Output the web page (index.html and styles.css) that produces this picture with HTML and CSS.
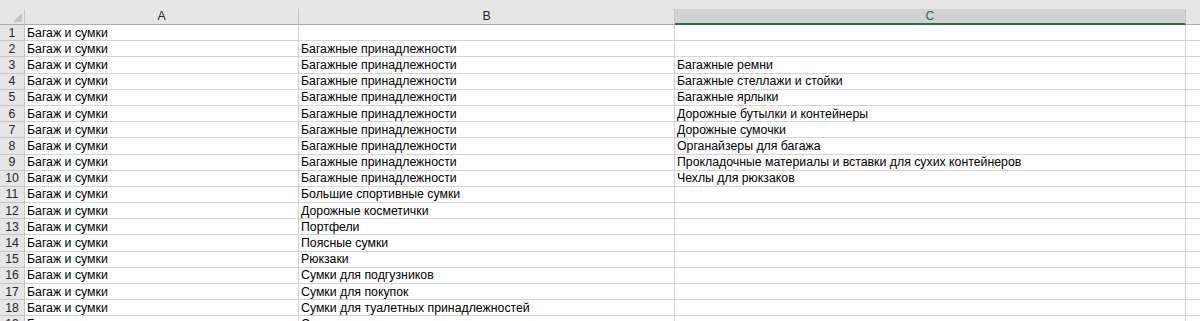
FILE: index.html
```html
<!DOCTYPE html>
<html lang="ru">
<head>
<meta charset="utf-8">
<title>Лист</title>
<link rel="stylesheet" href="styles.css">
</head>
<body>
<div class="strip"></div>
<div class="sheet">
  <div class="corner"><svg class="tri" width="9" height="9" viewBox="0 0 9 9"><polygon points="9,0 9,9 0,9" fill="#c3c3c3"/></svg></div>
  <div class="colhead">A</div>
  <div class="colhead">B</div>
  <div class="colhead sel">C</div>
  <div class="colhead last"></div>

  <div class="rowhead">1</div><div class="cell">Багаж и сумки</div><div class="cell"></div><div class="cell"></div><div class="cell last"></div>
  <div class="rowhead">2</div><div class="cell">Багаж и сумки</div><div class="cell">Багажные принадлежности</div><div class="cell"></div><div class="cell last"></div>
  <div class="rowhead">3</div><div class="cell">Багаж и сумки</div><div class="cell">Багажные принадлежности</div><div class="cell">Багажные ремни</div><div class="cell last"></div>
  <div class="rowhead">4</div><div class="cell">Багаж и сумки</div><div class="cell">Багажные принадлежности</div><div class="cell">Багажные стеллажи и стойки</div><div class="cell last"></div>
  <div class="rowhead">5</div><div class="cell">Багаж и сумки</div><div class="cell">Багажные принадлежности</div><div class="cell">Багажные ярлыки</div><div class="cell last"></div>
  <div class="rowhead">6</div><div class="cell">Багаж и сумки</div><div class="cell">Багажные принадлежности</div><div class="cell">Дорожные бутылки и контейнеры</div><div class="cell last"></div>
  <div class="rowhead">7</div><div class="cell">Багаж и сумки</div><div class="cell">Багажные принадлежности</div><div class="cell">Дорожные сумочки</div><div class="cell last"></div>
  <div class="rowhead">8</div><div class="cell">Багаж и сумки</div><div class="cell">Багажные принадлежности</div><div class="cell">Органайзеры для багажа</div><div class="cell last"></div>
  <div class="rowhead">9</div><div class="cell">Багаж и сумки</div><div class="cell">Багажные принадлежности</div><div class="cell">Прокладочные материалы и вставки для сухих контейнеров</div><div class="cell last"></div>
  <div class="rowhead">10</div><div class="cell">Багаж и сумки</div><div class="cell">Багажные принадлежности</div><div class="cell">Чехлы для рюкзаков</div><div class="cell last"></div>
  <div class="rowhead">11</div><div class="cell">Багаж и сумки</div><div class="cell">Большие спортивные сумки</div><div class="cell"></div><div class="cell last"></div>
  <div class="rowhead">12</div><div class="cell">Багаж и сумки</div><div class="cell">Дорожные косметички</div><div class="cell"></div><div class="cell last"></div>
  <div class="rowhead">13</div><div class="cell">Багаж и сумки</div><div class="cell">Портфели</div><div class="cell"></div><div class="cell last"></div>
  <div class="rowhead">14</div><div class="cell">Багаж и сумки</div><div class="cell">Поясные сумки</div><div class="cell"></div><div class="cell last"></div>
  <div class="rowhead">15</div><div class="cell">Багаж и сумки</div><div class="cell">Рюкзаки</div><div class="cell"></div><div class="cell last"></div>
  <div class="rowhead">16</div><div class="cell">Багаж и сумки</div><div class="cell">Сумки для подгузников</div><div class="cell"></div><div class="cell last"></div>
  <div class="rowhead">17</div><div class="cell">Багаж и сумки</div><div class="cell">Сумки для покупок</div><div class="cell"></div><div class="cell last"></div>
  <div class="rowhead">18</div><div class="cell">Багаж и сумки</div><div class="cell">Сумки для туалетных принадлежностей</div><div class="cell"></div><div class="cell last"></div>
  <div class="rowhead">19</div><div class="cell">Багаж и сумки</div><div class="cell">Сумки через плечо</div><div class="cell"></div><div class="cell last"></div>
</div>
</body>
</html>
```

FILE: styles.css
```css
html, body {
  margin: 0;
  padding: 0;
  background: #ffffff;
  overflow: hidden;
  width: 1200px;
  height: 321px;
}

body {
  font-family: "Liberation Sans", Arial, sans-serif;
  font-size: 12.3px;
  color: #000;
}

.strip {
  height: 9px;
  background: #e6e6e6;
}

.sheet {
  display: grid;
  grid-template-columns: 25px 274px 376px 511px 1fr;
  grid-template-rows: 16px repeat(19, 16.2px);
}

.corner {
  background: #e6e6e6;
  border-right: 1px solid #c6c6c6;
  border-bottom: 1px solid #ababab;
  position: relative;
}

.tri {
  position: absolute;
  right: 2px;
  bottom: 2px;
}

.colhead {
  background: #e6e6e6;
  border-right: 1px solid #c6c6c6;
  border-bottom: 1px solid #ababab;
  color: #262626;
  text-align: center;
  line-height: 15px;
  overflow: hidden;
}

.colhead.sel {
  background: #d2d2d2;
  color: #217346;
  border-bottom: 2px solid #217346;
  line-height: 14px;
}

.colhead.last {
  border-right: none;
}

.rowhead {
  background: #e6e6e6;
  border-right: 1px solid #c6c6c6;
  border-bottom: 1px solid #c6c6c6;
  color: #262626;
  display: flex;
  align-items: center;
  justify-content: center;
  overflow: hidden;
}

.cell {
  border-right: 1px solid #d4d4d4;
  border-bottom: 1px solid #d4d4d4;
  padding-left: 2px;
  display: flex;
  align-items: center;
  white-space: nowrap;
  overflow: visible;
  color: #000;
}

.cell.last {
  border-right: none;
}
```
